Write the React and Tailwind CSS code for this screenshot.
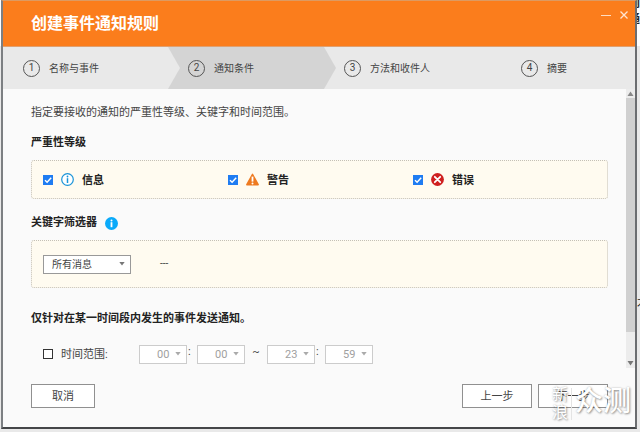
import React from "react";

const STEPS = [
  { id: 1, label: "名称与事件" },
  { id: 2, label: "通知条件", active: true },
  { id: 3, label: "方法和收件人" },
  { id: 4, label: "摘要" },
];

function Chevron({ fill }) {
  return (
    <svg viewBox="0 0 12 42" className="h-full w-3 shrink-0" preserveAspectRatio="none" aria-hidden="true">
      <path d="M0 0 L12 21 L0 42 Z" fill={fill} />
    </svg>
  );
}

function Step({ step, chevron }) {
  return (
    <li
      aria-current={step.active ? "step" : undefined}
      className={`flex h-full items-center ${step.active ? "bg-[#d4d4d4]" : "bg-[#e9e9e9]"}`}
    >
      <Chevron fill={chevron} />
      <span className="ml-2 flex size-[17px] shrink-0 items-center justify-center rounded-full border border-[#555] text-[10px] leading-none">
        {step.id}
      </span>
      <span className="ml-[9px] whitespace-nowrap pt-[2px] text-[10px] leading-4">{step.label}</span>
    </li>
  );
}

function InfoOutline() {
  return (
    <svg viewBox="0 0 13 13" className="size-[13px]" aria-hidden="true">
      <circle cx="6.5" cy="6.5" r="5.8" fill="#fff" stroke="#1a94d8" strokeWidth="1.2" />
      <circle cx="6.5" cy="3.5" r="0.9" fill="#1a94d8" />
      <path d="M6.5 5.2 V10" stroke="#1a94d8" strokeWidth="1.5" />
    </svg>
  );
}

function InfoSolid() {
  return (
    <svg viewBox="0 0 13 13" className="size-[13px]" aria-hidden="true">
      <circle cx="6.5" cy="6.5" r="6.5" fill="#0aaafa" />
      <circle cx="6.5" cy="3.4" r="1" fill="#fff" />
      <path d="M6.5 5.2 V10.2" stroke="#fff" strokeWidth="1.8" />
    </svg>
  );
}

function Warning() {
  return (
    <svg viewBox="0 0 13 13" className="size-[13px]" aria-hidden="true">
      <path d="M6.5 1.3 L12.2 11.7 H0.8 Z" fill="#ee7a20" stroke="#ee7a20" strokeWidth="1.4" strokeLinejoin="round" />
      <path d="M6.5 3.6 V8.6" stroke="#fff" strokeWidth="1.8" />
      <circle cx="6.5" cy="10.5" r="1" fill="#fff" />
    </svg>
  );
}

function ErrorIcon() {
  return (
    <svg viewBox="0 0 13 13" className="size-[13px]" aria-hidden="true">
      <circle cx="6.5" cy="6.5" r="6.4" fill="#cf2020" />
      <path d="M3.8 3.8 L9.2 9.2 M9.2 3.8 L3.8 9.2" stroke="#fff" strokeWidth="1.8" strokeLinecap="round" />
    </svg>
  );
}

function Severity({ id, label, icon }) {
  return (
    <div className="flex items-center gap-2">
      <span className="grid size-[10px] place-items-center">
        <input
          id={id}
          type="checkbox"
          defaultChecked
          className="peer col-start-1 row-start-1 size-[10px] appearance-none border border-[#1f7cf2] bg-white checked:bg-[#1f7cf2]"
        />
        <svg
          viewBox="0 0 10 10"
          className="pointer-events-none invisible col-start-1 row-start-1 size-[10px] peer-checked:visible"
          aria-hidden="true"
        >
          <path d="M2 5.2 L4.1 7.3 L8.2 2.8" fill="none" stroke="#fff" strokeWidth="1.4" />
        </svg>
      </span>
      <label htmlFor={id} className="flex items-center gap-2 text-[11px] font-bold leading-4 text-[#222]">
        {icon}
        <span className="pt-[2px]">{label}</span>
      </label>
    </div>
  );
}

function Caret({ fill }) {
  return (
    <svg
      viewBox="0 0 6 4"
      className="pointer-events-none col-start-1 row-start-1 mr-[6px] h-1 w-[6px] justify-self-end"
      aria-hidden="true"
    >
      <path d="M0.3 0 H5.7 L3 3.6 Z" fill={fill} />
    </svg>
  );
}

function TimeSelect({ value, label }) {
  return (
    <span className="grid w-12 items-center">
      <select
        aria-label={label}
        disabled
        defaultValue={value}
        className="col-start-1 row-start-1 h-[19px] w-full appearance-none border border-[#ccc] bg-white pl-[17px] pt-px text-[11px] leading-4 text-[#a0a0a0] opacity-100"
      >
        <option>{value}</option>
      </select>
      <Caret fill="#aaa" />
    </span>
  );
}

function FooterButton({ children, className }) {
  return (
    <button
      type="button"
      className={`h-6 border border-[#909090] bg-white pt-[2px] text-[11px] leading-4 text-[#444] ${className}`}
    >
      {children}
    </button>
  );
}

function Heading({ children }) {
  return <h2 className="text-[11px] font-bold leading-[18px] text-[#222]">{children}</h2>;
}

export default function App() {
  return (
    <div className="relative flex min-h-screen flex-col overflow-hidden bg-[#e9e9e9] font-[Roboto,'Noto_Sans_CJK_SC',sans-serif] text-[#444]">
      <div className="flex">
        <div className="w-px shrink-0">
          <div className="h-[46px] bg-white" />
        </div>

        <main className="min-w-0 flex-1 border-x-2 border-b-2 border-t border-b-[#444648] border-l-[#7c7f82] border-r-[#6b6d70] border-t-[#dd9a62] bg-[#fafafa]">
          <header className="flex h-[46px] items-center justify-between border-b border-[#e0a070] bg-[#fb7d1c] pl-7 pt-px">
            <h1 className="text-base font-bold leading-6 text-white">创建事件通知规则</h1>
            <div className="mb-[18px] mr-[6px] flex items-center gap-2">
              <button type="button" aria-label="最小化">
                <svg viewBox="0 0 10 10" className="size-[10px]" aria-hidden="true">
                  <path d="M0 5.5 H10" stroke="#ffdcc0" strokeWidth="1" />
                </svg>
              </button>
              <button type="button" aria-label="关闭">
                <svg viewBox="0 0 10 10" className="size-[10px]" aria-hidden="true">
                  <path d="M1.5 1.5 L8.5 8.5 M8.5 1.5 L1.5 8.5" stroke="#ffe4d0" strokeWidth="1.3" />
                </svg>
              </button>
            </div>
          </header>

          <ol className="grid h-[42px] grid-cols-[165fr_156fr_177fr_134fr]">
            {STEPS.map((step, i) => (
              <Step key={step.id} step={step} chevron={i > 0 && STEPS[i - 1].active ? "#d4d4d4" : "#e9e9e9"} />
            ))}
          </ol>

          <div className="flex">
            <div className="min-w-0 flex-1 pb-1 pl-7 pr-[18px] pt-[15px]">
              <p className="text-[11px] leading-[18px]">指定要接收的通知的严重性等级、关键字和时间范围。</p>

              <section className="mt-3">
                <Heading>严重性等级</Heading>
                <div className="mt-2 grid h-[39px] grid-cols-3 items-center rounded-[3px] border border-dotted border-[#c4c0b6] bg-[#fffbf0] pl-[11px] pr-[9px]">
                  <Severity id="sev-info" label="信息" icon={<InfoOutline />} />
                  <Severity id="sev-warning" label="警告" icon={<Warning />} />
                  <Severity id="sev-error" label="错误" icon={<ErrorIcon />} />
                </div>
              </section>

              <section className="mt-[15px]">
                <div className="flex items-center gap-2">
                  <Heading>关键字筛选器</Heading>
                  <InfoSolid />
                </div>
                <div className="mt-2 flex h-12 items-center rounded-[3px] border border-dotted border-[#c4c0b6] bg-[#fffbf0] pl-[11px] pr-[9px]">
                  <span className="grid w-[88px] items-center">
                    <select
                      aria-label="关键字筛选器"
                      className="col-start-1 row-start-1 h-[19px] w-full appearance-none border border-[#999] bg-white pl-2 pt-px text-[10px] leading-4 text-[#444]"
                    >
                      <option>所有消息</option>
                    </select>
                    <Caret fill="#777" />
                  </span>
                  <span className="ml-[29px] text-[10px] leading-4">---</span>
                </div>
              </section>

              <section className="mt-[22px]">
                <Heading>仅针对在某一时间段内发生的事件发送通知。</Heading>
                <div className="ml-3 mt-4 flex items-center">
                  <input
                    id="time-range"
                    type="checkbox"
                    className="size-[10px] appearance-none border border-[#333] bg-white checked:bg-[#1f7cf2]"
                  />
                  <label htmlFor="time-range" className="ml-2 w-[78px] pt-[2px] text-[11px] leading-4">
                    时间范围:
                  </label>
                  <TimeSelect value="00" label="开始小时" />
                  <span className="w-[10px] pb-1 pl-px text-[11px] leading-4">:</span>
                  <TimeSelect value="00" label="开始分钟" />
                  <span className="w-[22px] pb-1 text-center text-[11px] leading-4">~</span>
                  <TimeSelect value="23" label="结束小时" />
                  <span className="w-[10px] pb-1 pl-px text-[11px] leading-4">:</span>
                  <TimeSelect value="59" label="结束分钟" />
                </div>
              </section>
            </div>

            <div className="flex w-[9px] shrink-0 flex-col bg-[#ececec]" aria-hidden="true">
              <svg viewBox="0 0 9 9" className="size-[9px]">
                <path d="M1.5 7 L4.5 2.5 L7.5 7 Z" fill="#888" />
              </svg>
              <div className="flex-[234] bg-[#d0d0d0]" />
              <div className="flex-[27]" />
              <svg viewBox="0 0 9 9" className="size-[9px]">
                <path d="M1.5 2 L4.5 6.5 L7.5 2 Z" fill="#777" />
              </svg>
            </div>
          </div>

          <footer className="flex items-center gap-[6px] pb-[19px] pl-7 pr-[27px] pt-4">
            <FooterButton className="mr-auto w-16">取消</FooterButton>
            <FooterButton className="w-[70px]">上一步</FooterButton>
            <FooterButton className="w-[70px]">下一步</FooterButton>
          </footer>
        </main>

        <div className="flex w-[3px] shrink-0 flex-col overflow-hidden text-[#222]" aria-hidden="true">
          <div className="flex h-[46px] flex-col items-end bg-white text-[11px] font-bold leading-4">
            <span className="-mt-1">则</span>
            <span>通</span>
          </div>
          <div className="mt-[250px] flex flex-col items-start text-[11px] leading-4">
            <span>才</span>
          </div>
        </div>
      </div>

      <div
        className="pointer-events-none absolute bottom-2 right-[9px] flex items-center gap-[3px] text-white [text-shadow:1px_1px_2px_rgba(0,0,0,0.35),0_0_2px_rgba(0,0,0,0.25)]"
        aria-hidden="true"
      >
        <span className="flex w-4 flex-col text-base leading-[18px]">
          <span>新</span>
          <span>浪</span>
        </span>
        <span className="h-8 w-px bg-[#e4e4e4]" />
        <span className="pb-1 text-[28px] font-medium leading-9">众测</span>
      </div>
    </div>
  );
}
